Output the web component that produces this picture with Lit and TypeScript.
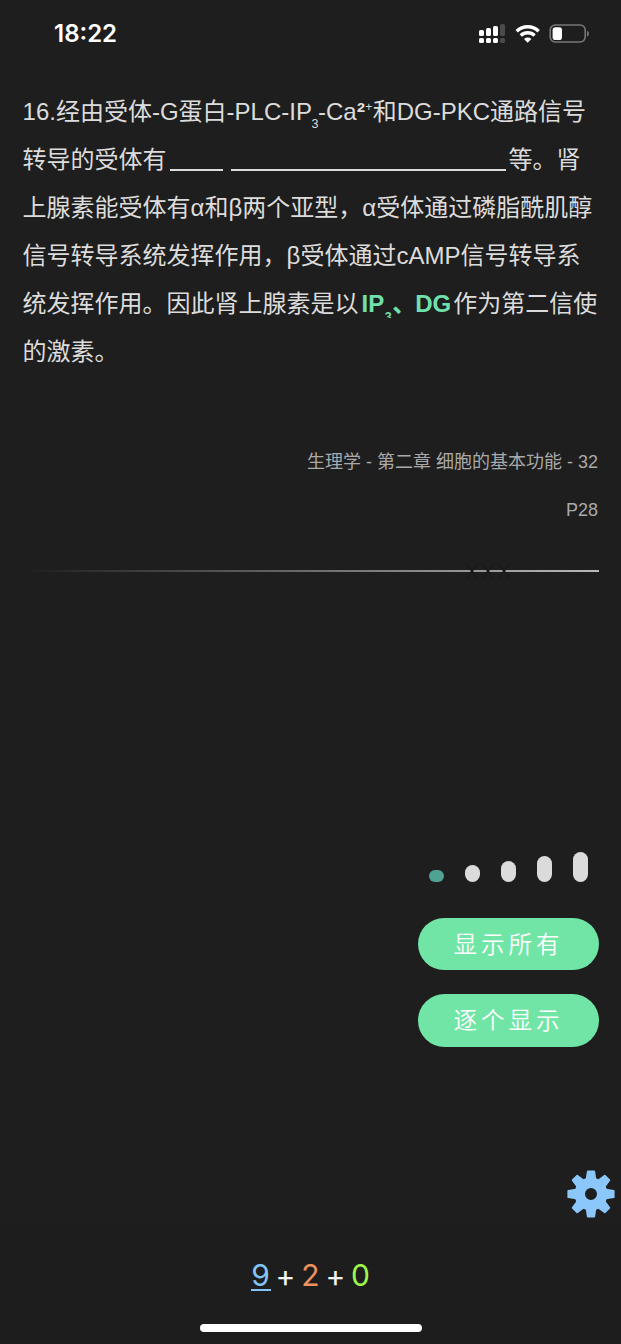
import { LitElement, html, svg, css } from "lit";
import { customElement } from "lit/decorators.js";

const TEETH = [0, 45, 90, 135, 180, 225, 270, 315];

@customElement("app-root")
class AppRoot extends LitElement {
  static styles = css`
    :host {
      display: flex;
      flex-direction: column;
      box-sizing: border-box;
      height: 1344px;
      width: 100%;
      overflow: hidden;
      background: #1e1e1e;
      color: #dcdcdc;
      font-family: "Liberation Sans", "Noto Sans CJK SC", sans-serif;
    }
    .status {
      height: 88px;
      box-sizing: border-box;
      padding: 20px 31px 0 54px;
      display: flex;
      justify-content: space-between;
      align-items: flex-start;
    }
    .time {
      font: 600 24px/28px Inter, sans-serif;
      letter-spacing: 0;
      color: #fff;
    }
    .icons { display: block; }
    .question { padding: 0 23px 0 22.6px; height: 350px; }
    .line {
      height: 48px;
      font-size: 24px;
      line-height: 48px;
      white-space: nowrap;
      display: flex;
    }
    .sub { font-size: 12.5px; padding-top: 12px; width: 6px; display: flex; justify-content: center; }
    .square { font-size: 25px; width: 8px; margin-right: 0.5px; font-weight: 700; }
    .plus { font-size: 12px; width: 7.5px; margin-top: -5px; }
    .blank {
      height: 2px;
      background: #dcdcdc;
      margin: 33px 0 0 3px;
      width: 53px;
    }
    .blank.wide { width: 275px; margin: 33px 3px 0 8px; }
    .answer {
      display: flex;
      height: 38px;
      overflow: hidden;
      color: #70e0ad;
      font-weight: 700;
      margin: 0 2px 0 3px;
    }
    .answer .sub { padding-top: 13px; width: 8px; }
    .comma { width: 23px; }
    .source {
      height: 132px;
      padding-right: 23px;
      text-align: right;
      font-size: 18px;
      line-height: 48px;
      color: #a9a9a9;
    }
    .divider {
      height: 2px;
      margin: 0 22px 0 23px;
      background: linear-gradient(90deg, #1e1e1e, #b9b9b9);
      display: flex;
      justify-content: flex-end;
      align-items: center;
    }
    .marks { display: block; margin-right: 88px; }
    .levels {
      height: 32px;
      margin: 278px 33px 0 0;
      display: flex;
      justify-content: flex-end;
      align-items: flex-end;
      gap: 21px;
    }
    .level { width: 15px; border-radius: 8px; background: #dbdbdb; }
    .l1 { height: 12.5px; background: #4fa393; border-radius: 6.5px; }
    .l2 { height: 17px; }
    .l3 { height: 21.5px; }
    .l4 { height: 26px; }
    .l5 { height: 30.5px; }
    .actions {
      display: flex;
      flex-direction: column;
      align-items: flex-end;
      gap: 24px;
      padding: 35.5px 22px 0 0;
    }
    .button {
      width: 181px;
      height: 52.5px;
      border: 0;
      padding: 0 0 2px 0;
      border-radius: 27px;
      background: #71e5a5;
      color: #fff;
      font: 350 23.5px/50px "Noto Sans CJK SC", sans-serif;
      letter-spacing: 4px;
    }
    .tools {
      display: flex;
      justify-content: flex-end;
      padding: 123.5px 6px 0 0;
      height: 55px;
    }
    .tools svg { display: block; }
    .footer {
      flex: 1;
      background: #1d1d1d;
      display: flex;
      flex-direction: column;
      align-items: center;
    }
    .counts {
      display: flex;
      height: 60px;
      margin-top: 32px;
      font: 400 30px/36px Inter, sans-serif;
      color: #f4f4f4;
    }
    .n { width: 20px; text-align: center; box-sizing: border-box; }
    .p { width: 30px; text-align: center; padding-top: 1px; }
    .blue { color: #82c4f8; height: 34px; border-bottom: 2px solid #82c4f8; }
    .orange { color: #ef915f; }
    .green { color: #9df84c; }
    .home { width: 222px; height: 8px; margin-top: 7px; border-radius: 4px; background: #fff; }
  `;

  render() {
    return html`
      <div class="status">
        <div class="time">18:22</div>
        <svg class="icons" width="112" height="28" viewBox="478 20 112 28">
          <g fill="#fff">
            <rect x="479" y="30" width="5" height="6" rx="1.6" />
            <rect x="486" y="28" width="5" height="8" rx="1.6" />
            <rect x="493" y="26" width="5" height="10" rx="1.6" />
            <rect x="479" y="38" width="5" height="5" rx="1.6" />
            <rect x="486" y="38" width="5" height="5" rx="1.6" />
            <rect x="493" y="38" width="5" height="5" rx="1.6" />
          </g>
          <g fill="#4b4b4b">
            <rect x="500" y="24" width="5" height="12" rx="1.6" />
            <rect x="500" y="38" width="5" height="5" rx="1.6" />
          </g>
          <g fill="none" stroke="#fff" stroke-width="3.4">
            <path d="M516.7 31.2a16 16 0 0 1 22 0" />
            <path d="M520.8 35.5a10 10 0 0 1 13.8 0" />
          </g>
          <path d="M527.7 42.8l-3.7-3.9a5.4 5.4 0 0 1 7.4 0z" fill="#fff" />
          <rect x="550.2" y="25" width="35" height="17" rx="5" fill="none" stroke="#777" stroke-width="1.6" />
          <rect x="552.6" y="27.2" width="9.4" height="12.8" rx="2.8" fill="#fff" />
          <path d="M587 30.8q2 .8 2 3t-2 3z" fill="#777" />
        </svg>
      </div>
      <div class="question">
        <div class="line"><span>16.经由受体-G蛋白-PLC-IP</span><span class="sub">3</span><span>-Ca</span><span class="square">²</span><span class="plus">+</span><span>和DG-PKC通路信号</span></div>
        <div class="line"><span>转导的受体有</span><span class="blank"></span><span class="blank wide"></span><span>等。肾</span></div>
        <div class="line">上腺素能受体有α和β两个亚型，α受体通过磷脂酰肌醇</div>
        <div class="line">信号转导系统发挥作用，β受体通过cAMP信号转导系</div>
        <div class="line"><span>统发挥作用。因此肾上腺素是以</span><span class="answer"><span>IP</span><span class="sub">3</span><span class="comma">、</span><span>DG</span></span><span>作为第二信使</span></div>
        <div class="line">的激素。</div>
      </div>
      <div class="source">
        <div>生理学 - 第二章 细胞的基本功能 - 32</div>
        <div>P28</div>
      </div>
      <div class="divider">
        <svg class="marks" width="46" height="18" viewBox="0 0 46 18" fill="none" stroke="#1a1a1a" stroke-width="2">
          <path d="M1 1l12 16M13 1L1 17M17 1l12 16M29 1L17 17M33 1l12 16M45 1L33 17" />
        </svg>
      </div>
      <div class="levels">
        <span class="level l1"></span><span class="level l2"></span><span class="level l3"></span><span class="level l4"></span><span class="level l5"></span>
      </div>
      <div class="actions">
        <button class="button">显示所有</button>
        <button class="button">逐个显示</button>
      </div>
      <div class="tools">
        <svg width="48" height="48" viewBox="-24 -24 48 48" fill="#8bc7fb">
          <path fill-rule="evenodd" d="M-16.5 0a16.5 16.5 0 1 0 33 0a16.5 16.5 0 1 0-33 0M-6 0a6 6 0 1 1 12 0a6 6 0 1 1-12 0" />
          ${TEETH.map(
            (angle) =>
              svg`<path transform="rotate(${angle})" d="M-5.4-14L-4.1-22.8Q-4-23.6-3.2-23.6H3.2Q4-23.6 4.1-22.8L5.4-14z" />`
          )}
        </svg>
      </div>
      <div class="footer">
        <div class="counts">
          <span class="n blue">9</span><span class="p">+</span><span class="n orange">2</span><span class="p">+</span><span class="n green">0</span>
        </div>
        <div class="home"></div>
      </div>
    `;
  }
}
